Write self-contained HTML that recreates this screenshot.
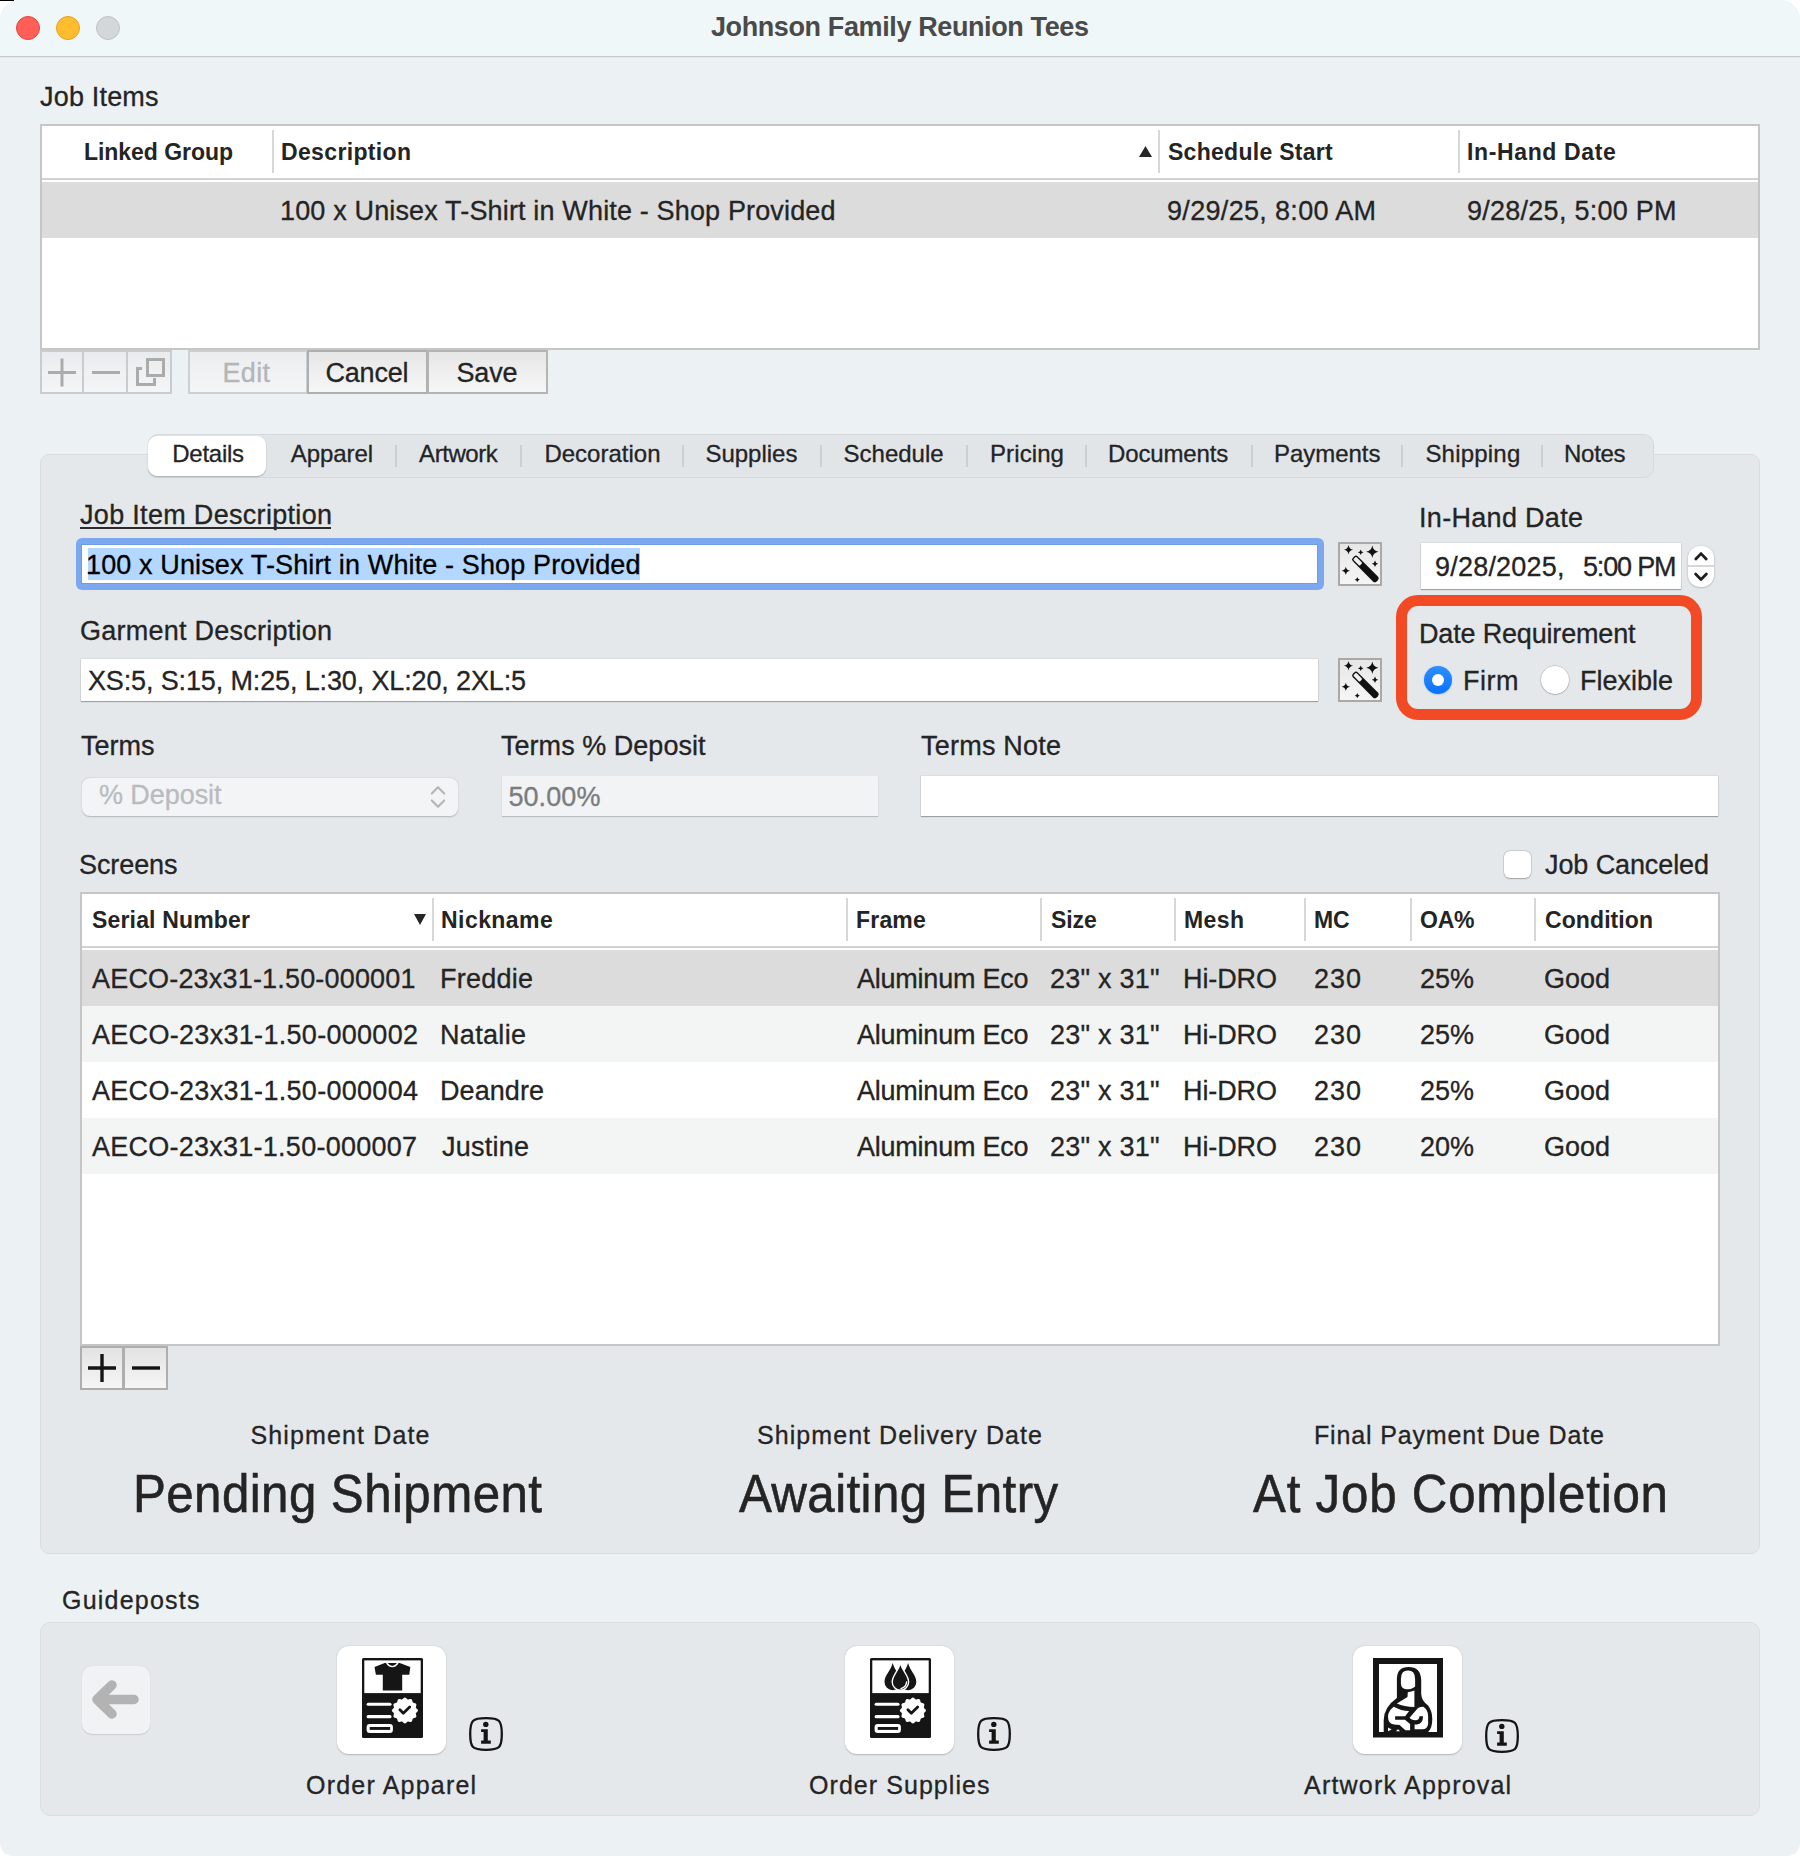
<!DOCTYPE html><html><head><meta charset="utf-8"><style>
*{box-sizing:border-box;margin:0;padding:0}
html,body{width:1800px;height:1856px;overflow:hidden;background:#fff}
body{font-family:"Liberation Sans",sans-serif;position:relative}
.t{position:absolute;white-space:pre}
.r{position:absolute}
svg{position:absolute;overflow:visible}
</style></head><body>
<div class="r" style="left:0px;top:0px;width:1800px;height:1856px;background:#ECF1F4;border-radius:20px 20px 13px 13px"></div>
<div class="r" style="left:0px;top:0px;width:14px;height:1px;background:#000"></div>
<div class="r" style="left:0px;top:0px;width:1800px;height:56px;background:#EFF7F9;border-radius:20px 20px 0 0"></div>
<div class="r" style="left:0px;top:55px;width:1800px;height:1px;background:#F1F8FA"></div>
<div class="r" style="left:0px;top:56px;width:1800px;height:1px;background:#C4C9CD"></div>
<div class="r" style="left:0px;top:57px;width:1800px;height:1px;background:#E2E7EA"></div>
<div class="r" style="left:16px;top:16px;width:24px;height:24px;border-radius:50%;background:#FF5F57;border:1px solid #E2463F"></div>
<div class="r" style="left:56px;top:16px;width:24px;height:24px;border-radius:50%;background:#FEBC2E;border:1px solid #E1A325"></div>
<div class="r" style="left:96px;top:16px;width:24px;height:24px;border-radius:50%;background:#D3D7DA;border:1px solid #BFC3C6"></div>
<div class="t" style="left:710.90px;top:14px;font-size:27px;line-height:27px;letter-spacing:-0.386px;color:#4A4A4A;font-weight:700;">Johnson Family Reunion Tees</div>
<div class="t" style="left:40.00px;top:84px;font-size:27px;line-height:27px;letter-spacing:0.182px;color:#242424;-webkit-text-stroke:0.30px currentColor;">Job Items</div>
<div class="r" style="left:40px;top:124px;width:1720px;height:226px;background:#fff;border:2px solid #C6C6C6"></div>
<div class="r" style="left:42px;top:178px;width:1716px;height:2px;background:#D2D2D2"></div>
<div class="r" style="left:42px;top:182px;width:1716px;height:56px;background:#DCDCDC"></div>
<div class="r" style="left:272px;top:130px;width:2px;height:43px;background:#D8D8D8"></div>
<div class="r" style="left:1158px;top:130px;width:2px;height:43px;background:#D8D8D8"></div>
<div class="r" style="left:1458px;top:130px;width:2px;height:43px;background:#D8D8D8"></div>
<div class="t" style="left:84.00px;top:141px;font-size:23px;line-height:23px;letter-spacing:-0.041px;color:#242424;font-weight:700;">Linked Group</div>
<div class="t" style="left:281.00px;top:141px;font-size:23px;line-height:23px;letter-spacing:0.353px;color:#242424;font-weight:700;">Description</div>
<div class="t" style="left:1168.00px;top:141px;font-size:23px;line-height:23px;letter-spacing:0.278px;color:#242424;font-weight:700;">Schedule Start</div>
<div class="t" style="left:1467.00px;top:141px;font-size:23px;line-height:23px;letter-spacing:0.632px;color:#242424;font-weight:700;">In-Hand Date</div>
<svg style="left:1139px;top:146px" width="13" height="11"><path d="M0 11 L6.5 0 L13 11Z" fill="#262626"/></svg>
<div class="t" style="left:280.00px;top:198px;font-size:27px;line-height:27px;letter-spacing:0.154px;color:#242424;-webkit-text-stroke:0.30px currentColor;">100 x Unisex T-Shirt in White - Shop Provided</div>
<div class="t" style="left:1167.00px;top:198px;font-size:27px;line-height:27px;letter-spacing:0.324px;color:#242424;-webkit-text-stroke:0.30px currentColor;">9/29/25, 8:00 AM</div>
<div class="t" style="left:1467.00px;top:198px;font-size:27px;line-height:27px;letter-spacing:0.257px;color:#242424;-webkit-text-stroke:0.30px currentColor;">9/28/25, 5:00 PM</div>
<div class="r" style="left:40px;top:350px;width:44px;height:44px;background:linear-gradient(#E9ECEE,#F4F5F6);border:2px solid #C9CCCE"></div>
<div class="r" style="left:82px;top:350px;width:46px;height:44px;background:linear-gradient(#E9ECEE,#F4F5F6);border:2px solid #C9CCCE"></div>
<div class="r" style="left:126px;top:350px;width:46px;height:44px;background:linear-gradient(#E9ECEE,#F4F5F6);border:2px solid #C9CCCE"></div>
<svg style="left:40px;top:350px" width="132" height="44"><g stroke="#ABABAB" stroke-width="3" fill="none"><path d="M8 22.5 H36 M22 8.5 V36.5"/><path d="M52 22.5 H80"/><rect x="107.5" y="9.5" width="16" height="16"/><path d="M102 18.5 H97.5 V34.5 H114.5 V28"/></g></svg>
<div class="r" style="left:188px;top:350px;width:120px;height:44px;background:linear-gradient(#EBEDEF,#F4F5F6);border:2px solid #CDD0D2"></div>
<div class="r" style="left:307px;top:350px;width:121px;height:44px;background:linear-gradient(#E6E6E6,#F7F7F7);border:2px solid #AEAEAE"></div>
<div class="r" style="left:427px;top:350px;width:121px;height:44px;background:linear-gradient(#E6E6E6,#F7F7F7);border:2px solid #B4B4B4"></div>
<div class="t" style="left:222.50px;top:360px;font-size:27px;line-height:27px;letter-spacing:0.326px;color:#B3B5B7;-webkit-text-stroke:0.30px currentColor;">Edit</div>
<div class="t" style="left:325.50px;top:360px;font-size:27px;line-height:27px;letter-spacing:-0.209px;color:#242424;-webkit-text-stroke:0.30px currentColor;">Cancel</div>
<div class="t" style="left:456.50px;top:360px;font-size:27px;line-height:27px;letter-spacing:-0.175px;color:#242424;-webkit-text-stroke:0.30px currentColor;">Save</div>
<div class="r" style="left:40px;top:454px;width:1720px;height:1100px;background:#E4E8EB;border:1px solid #D9DDE0;border-radius:9px"></div>
<div class="r" style="left:148px;top:434px;width:1506px;height:44px;background:#E1E5E8;border:1px solid #D6DADD;border-radius:10px"></div>
<div class="r" style="left:148px;top:436px;width:118px;height:40px;background:#fff;border-radius:9px;box-shadow:0 1px 1.5px rgba(0,0,0,0.25)"></div>
<div class="t" style="left:172.20px;top:442px;font-size:24px;line-height:24px;letter-spacing:-0.243px;color:#242424;-webkit-text-stroke:0.30px currentColor;">Details</div>
<div class="t" style="left:290.80px;top:442px;font-size:24px;line-height:24px;letter-spacing:-0.082px;color:#242424;-webkit-text-stroke:0.30px currentColor;">Apparel</div>
<div class="t" style="left:419.10px;top:442px;font-size:24px;line-height:24px;letter-spacing:-0.457px;color:#242424;-webkit-text-stroke:0.30px currentColor;">Artwork</div>
<div class="t" style="left:544.40px;top:442px;font-size:24px;line-height:24px;letter-spacing:0.009px;color:#242424;-webkit-text-stroke:0.30px currentColor;">Decoration</div>
<div class="t" style="left:705.40px;top:442px;font-size:24px;line-height:24px;letter-spacing:-0.009px;color:#242424;-webkit-text-stroke:0.30px currentColor;">Supplies</div>
<div class="t" style="left:843.50px;top:442px;font-size:24px;line-height:24px;letter-spacing:0.010px;color:#242424;-webkit-text-stroke:0.30px currentColor;">Schedule</div>
<div class="t" style="left:990.00px;top:442px;font-size:24px;line-height:24px;letter-spacing:0.098px;color:#242424;-webkit-text-stroke:0.30px currentColor;">Pricing</div>
<div class="t" style="left:1108.00px;top:442px;font-size:24px;line-height:24px;letter-spacing:-0.148px;color:#242424;-webkit-text-stroke:0.30px currentColor;">Documents</div>
<div class="t" style="left:1274.00px;top:442px;font-size:24px;line-height:24px;letter-spacing:-0.044px;color:#242424;-webkit-text-stroke:0.30px currentColor;">Payments</div>
<div class="t" style="left:1425.40px;top:442px;font-size:24px;line-height:24px;letter-spacing:0.205px;color:#242424;-webkit-text-stroke:0.30px currentColor;">Shipping</div>
<div class="t" style="left:1564.00px;top:442px;font-size:24px;line-height:24px;letter-spacing:-0.274px;color:#242424;-webkit-text-stroke:0.30px currentColor;">Notes</div>
<div class="r" style="left:394.5px;top:445px;width:2px;height:22px;background:#CBCFD2"></div>
<div class="r" style="left:520.3px;top:445px;width:2px;height:22px;background:#CBCFD2"></div>
<div class="r" style="left:682.3px;top:445px;width:2px;height:22px;background:#CBCFD2"></div>
<div class="r" style="left:820.0px;top:445px;width:2px;height:22px;background:#CBCFD2"></div>
<div class="r" style="left:966.0px;top:445px;width:2px;height:22px;background:#CBCFD2"></div>
<div class="r" style="left:1084.5px;top:445px;width:2px;height:22px;background:#CBCFD2"></div>
<div class="r" style="left:1250.8px;top:445px;width:2px;height:22px;background:#CBCFD2"></div>
<div class="r" style="left:1401.3px;top:445px;width:2px;height:22px;background:#CBCFD2"></div>
<div class="r" style="left:1540.5px;top:445px;width:2px;height:22px;background:#CBCFD2"></div>
<div class="t" style="left:80.00px;top:502px;font-size:27px;line-height:27px;letter-spacing:0.311px;color:#242424;-webkit-text-stroke:0.30px currentColor;">Job Item Description</div>
<div class="r" style="left:80px;top:527px;width:251px;height:2px;background:#2A2A2A"></div>
<div class="r" style="left:76px;top:538px;width:1248px;height:52px;border-radius:6px;background:#7CA8EF"></div>
<div class="r" style="left:82px;top:545px;width:1235px;height:38px;background:#fff;box-shadow:0 0 0 1px #6F9BE3"></div>
<div class="r" style="left:88px;top:548px;width:552px;height:32px;background:#B3D7FF"></div>
<div class="t" style="left:86.00px;top:552px;font-size:27px;line-height:27px;letter-spacing:0.131px;color:#000;-webkit-text-stroke:0.30px currentColor;">100 x Unisex T-Shirt in White - Shop Provided</div>
<svg style="left:1338px;top:542px" width="44" height="44"><defs><linearGradient id="wg" x1="0" y1="0" x2="0" y2="1"><stop offset="0" stop-color="#E6E6E6"/><stop offset="1" stop-color="#F6F6F6"/></linearGradient></defs><rect x="1" y="1" width="42" height="42" fill="url(#wg)" stroke="#A9A9A9" stroke-width="2"/>
<g fill="#111"><path d="M34.3 3.499999999999999 Q35.105999999999995 8.893999999999998 40.5 9.7 Q35.105999999999995 10.506 34.3 15.899999999999999 Q33.494 10.506 28.099999999999998 9.7 Q33.494 8.893999999999998 34.3 3.499999999999999Z"/><circle cx="34.3" cy="9.7" r="1.86"/><path d="M10.5 3.0 Q11.098 7.102 15.1 7.7 Q11.098 8.298 10.5 12.4 Q9.902 8.298 5.9 7.7 Q9.902 7.102 10.5 3.0Z"/><circle cx="10.5" cy="7.7" r="1.38"/><path d="M22.7 7.500000000000001 Q23.064 9.936 25.5 10.3 Q23.064 10.664000000000001 22.7 13.100000000000001 Q22.336 10.664000000000001 19.9 10.3 Q22.336 9.936 22.7 7.500000000000001Z"/><circle cx="22.7" cy="10.3" r="0.84"/><path d="M37 18.5 Q37.429 21.371000000000002 40.3 21.8 Q37.429 22.229 37 25.1 Q36.571 22.229 33.7 21.8 Q36.571 21.371000000000002 37 18.5Z"/><circle cx="37" cy="21.8" r="0.99"/><path d="M7.8 24.5 Q8.359 28.241 12.1 28.8 Q8.359 29.359 7.8 33.1 Q7.241 29.359 3.5 28.8 Q7.241 28.241 7.8 24.5Z"/><circle cx="7.8" cy="28.8" r="1.29"/><path d="M19.3 35.1 Q19.638 37.362 21.900000000000002 37.7 Q19.638 38.038000000000004 19.3 40.300000000000004 Q18.962 38.038000000000004 16.7 37.7 Q18.962 37.362 19.3 35.1Z"/><circle cx="19.3" cy="37.7" r="0.78"/></g>
<g transform="translate(27.4 26.9) rotate(45)">
<rect x="-16.8" y="-3.5" width="33.6" height="7" rx="2.6" fill="#111"/>
<rect x="-15.3" y="-2" width="9" height="4" rx="1" fill="#EFEFEF"/>
</g></svg>
<svg style="left:1338px;top:658px" width="44" height="44"><defs><linearGradient id="wg" x1="0" y1="0" x2="0" y2="1"><stop offset="0" stop-color="#E6E6E6"/><stop offset="1" stop-color="#F6F6F6"/></linearGradient></defs><rect x="1" y="1" width="42" height="42" fill="url(#wg)" stroke="#A9A9A9" stroke-width="2"/>
<g fill="#111"><path d="M34.3 3.499999999999999 Q35.105999999999995 8.893999999999998 40.5 9.7 Q35.105999999999995 10.506 34.3 15.899999999999999 Q33.494 10.506 28.099999999999998 9.7 Q33.494 8.893999999999998 34.3 3.499999999999999Z"/><circle cx="34.3" cy="9.7" r="1.86"/><path d="M10.5 3.0 Q11.098 7.102 15.1 7.7 Q11.098 8.298 10.5 12.4 Q9.902 8.298 5.9 7.7 Q9.902 7.102 10.5 3.0Z"/><circle cx="10.5" cy="7.7" r="1.38"/><path d="M22.7 7.500000000000001 Q23.064 9.936 25.5 10.3 Q23.064 10.664000000000001 22.7 13.100000000000001 Q22.336 10.664000000000001 19.9 10.3 Q22.336 9.936 22.7 7.500000000000001Z"/><circle cx="22.7" cy="10.3" r="0.84"/><path d="M37 18.5 Q37.429 21.371000000000002 40.3 21.8 Q37.429 22.229 37 25.1 Q36.571 22.229 33.7 21.8 Q36.571 21.371000000000002 37 18.5Z"/><circle cx="37" cy="21.8" r="0.99"/><path d="M7.8 24.5 Q8.359 28.241 12.1 28.8 Q8.359 29.359 7.8 33.1 Q7.241 29.359 3.5 28.8 Q7.241 28.241 7.8 24.5Z"/><circle cx="7.8" cy="28.8" r="1.29"/><path d="M19.3 35.1 Q19.638 37.362 21.900000000000002 37.7 Q19.638 38.038000000000004 19.3 40.300000000000004 Q18.962 38.038000000000004 16.7 37.7 Q18.962 37.362 19.3 35.1Z"/><circle cx="19.3" cy="37.7" r="0.78"/></g>
<g transform="translate(27.4 26.9) rotate(45)">
<rect x="-16.8" y="-3.5" width="33.6" height="7" rx="2.6" fill="#111"/>
<rect x="-15.3" y="-2" width="9" height="4" rx="1" fill="#EFEFEF"/>
</g></svg>
<div class="t" style="left:1419.00px;top:505px;font-size:27px;line-height:27px;letter-spacing:0.312px;color:#242424;-webkit-text-stroke:0.30px currentColor;">In-Hand Date</div>
<div class="r" style="left:1421px;top:543px;width:260px;height:46px;background:#fff;box-shadow:0 1px 1px rgba(0,0,0,0.28), 0 0 0 0.5px rgba(0,0,0,0.08)"></div>
<div class="t" style="left:1435.00px;top:554px;font-size:27px;line-height:27px;letter-spacing:0.209px;color:#242424;-webkit-text-stroke:0.30px currentColor;">9/28/2025,</div>
<div class="t" style="left:1583.00px;top:554px;font-size:27px;line-height:27px;letter-spacing:-1.177px;color:#242424;-webkit-text-stroke:0.30px currentColor;">5:00 PM</div>
<div class="r" style="left:1688px;top:546px;width:26px;height:41px;border-radius:12px;background:#fff;box-shadow:0 0.5px 2px rgba(0,0,0,0.3)"></div>
<div class="r" style="left:1688px;top:565px;width:26px;height:2px;background:#D6D6D6"></div>
<svg style="left:1688px;top:546px" width="26" height="41"><g stroke="#1E1E1E" stroke-width="2.8" fill="none" stroke-linecap="round" stroke-linejoin="round"><path d="M7.8 13 L13 7.6 L18.2 13"/><path d="M7.6 28 L13 33.4 L18.4 28"/></g></svg>
<div class="r" style="left:1396px;top:595px;width:306px;height:125px;border:11.5px solid #F24A24;border-radius:22px"></div>
<div class="t" style="left:1419.00px;top:621px;font-size:27px;line-height:27px;letter-spacing:-0.174px;color:#242424;-webkit-text-stroke:0.30px currentColor;">Date Requirement</div>
<div class="r" style="left:1424px;top:666px;width:28px;height:28px;border-radius:50%;background:linear-gradient(#2E8FFF,#0A72FF);box-shadow:0 0.5px 1.5px rgba(0,60,160,0.3)"></div>
<div class="r" style="left:1432px;top:674px;width:12px;height:12px;border-radius:50%;background:#fff"></div>
<div class="t" style="left:1463.00px;top:668px;font-size:27px;line-height:27px;letter-spacing:0.506px;color:#242424;-webkit-text-stroke:0.30px currentColor;">Firm</div>
<div class="r" style="left:1541px;top:666px;width:28px;height:28px;border-radius:50%;background:#fff;box-shadow:0 0 0 0.5px rgba(0,0,0,0.15),0 0.5px 1.5px rgba(0,0,0,0.3)"></div>
<div class="t" style="left:1580.00px;top:668px;font-size:27px;line-height:27px;letter-spacing:-0.003px;color:#242424;-webkit-text-stroke:0.30px currentColor;">Flexible</div>
<div class="t" style="left:80.00px;top:618px;font-size:27px;line-height:27px;letter-spacing:0.246px;color:#242424;-webkit-text-stroke:0.30px currentColor;">Garment Description</div>
<div class="r" style="left:81px;top:659px;width:1237px;height:42px;background:#fff;box-shadow:0 1px 1px rgba(0,0,0,0.28), 0 0 0 0.5px rgba(0,0,0,0.08)"></div>
<div class="t" style="left:88.00px;top:668px;font-size:27px;line-height:27px;letter-spacing:-0.136px;color:#242424;-webkit-text-stroke:0.30px currentColor;">XS:5, S:15, M:25, L:30, XL:20, 2XL:5</div>
<div class="t" style="left:81.00px;top:733px;font-size:27px;line-height:27px;letter-spacing:0.000px;color:#242424;-webkit-text-stroke:0.30px currentColor;">Terms</div>
<div class="t" style="left:501.00px;top:733px;font-size:27px;line-height:27px;letter-spacing:0.032px;color:#242424;-webkit-text-stroke:0.30px currentColor;">Terms % Deposit</div>
<div class="t" style="left:921.00px;top:733px;font-size:27px;line-height:27px;letter-spacing:0.220px;color:#242424;-webkit-text-stroke:0.30px currentColor;">Terms Note</div>
<div class="r" style="left:82px;top:778px;width:376px;height:38px;border-radius:8px;background:#F2F4F5;box-shadow:0 0.5px 1.5px rgba(0,0,0,0.22)"></div>
<div class="t" style="left:99.00px;top:782px;font-size:27px;line-height:27px;letter-spacing:-0.069px;color:#B9BCBE;-webkit-text-stroke:0.30px currentColor;">% Deposit</div>
<svg style="left:426px;top:782px" width="24" height="30"><g stroke="#B3B5B7" stroke-width="2.1" fill="none" stroke-linecap="round" stroke-linejoin="round"><path d="M5.8 11.6 L12 5.2 L18.2 11.6"/><path d="M5.8 18.4 L12 24.8 L18.2 18.4"/></g></svg>
<div class="r" style="left:502px;top:776px;width:376px;height:40px;background:#F1F3F4;box-shadow:0 1px 1px rgba(0,0,0,0.18)"></div>
<div class="t" style="left:508.40px;top:784px;font-size:27px;line-height:27px;letter-spacing:0.087px;color:#7A7C7E;-webkit-text-stroke:0.30px currentColor;">50.00%</div>
<div class="r" style="left:921px;top:776px;width:797px;height:40px;background:#fff;box-shadow:0 1px 1px rgba(0,0,0,0.28), 0 0 0 0.5px rgba(0,0,0,0.08)"></div>
<div class="t" style="left:79.00px;top:852px;font-size:27px;line-height:27px;letter-spacing:-0.091px;color:#242424;-webkit-text-stroke:0.30px currentColor;">Screens</div>
<div class="r" style="left:1504px;top:851px;width:27px;height:27px;border-radius:6px;background:#fff;box-shadow:0 0 0 0.5px rgba(0,0,0,0.14),0 0.5px 1.5px rgba(0,0,0,0.25)"></div>
<div class="t" style="left:1545.00px;top:852px;font-size:27px;line-height:27px;letter-spacing:-0.100px;color:#242424;-webkit-text-stroke:0.30px currentColor;">Job Canceled</div>
<div class="r" style="left:80px;top:892px;width:1640px;height:454px;background:#fff;border:2px solid #C6C6C6"></div>
<div class="r" style="left:82px;top:946px;width:1636px;height:2px;background:#D2D2D2"></div>
<div class="r" style="left:82px;top:950px;width:1636px;height:56px;background:#DCDCDC"></div>
<div class="r" style="left:82px;top:1006px;width:1636px;height:56px;background:#F3F4F4"></div>
<div class="r" style="left:82px;top:1118px;width:1636px;height:56px;background:#F3F4F4"></div>
<div class="r" style="left:432px;top:898px;width:2px;height:43px;background:#D8D8D8"></div>
<div class="r" style="left:846px;top:898px;width:2px;height:43px;background:#D8D8D8"></div>
<div class="r" style="left:1040px;top:898px;width:2px;height:43px;background:#D8D8D8"></div>
<div class="r" style="left:1174px;top:898px;width:2px;height:43px;background:#D8D8D8"></div>
<div class="r" style="left:1304px;top:898px;width:2px;height:43px;background:#D8D8D8"></div>
<div class="r" style="left:1410px;top:898px;width:2px;height:43px;background:#D8D8D8"></div>
<div class="r" style="left:1534px;top:898px;width:2px;height:43px;background:#D8D8D8"></div>
<svg style="left:414px;top:914px" width="12" height="11"><path d="M0 0 L12 0 L6 11Z" fill="#262626"/></svg>
<div class="t" style="left:92.00px;top:909px;font-size:23px;line-height:23px;letter-spacing:0.167px;color:#242424;font-weight:700;">Serial Number</div>
<div class="t" style="left:441.00px;top:909px;font-size:23px;line-height:23px;letter-spacing:0.446px;color:#242424;font-weight:700;">Nickname</div>
<div class="t" style="left:856.00px;top:909px;font-size:23px;line-height:23px;letter-spacing:0.189px;color:#242424;font-weight:700;">Frame</div>
<div class="t" style="left:1051.00px;top:909px;font-size:23px;line-height:23px;letter-spacing:-0.077px;color:#242424;font-weight:700;">Size</div>
<div class="t" style="left:1184.00px;top:909px;font-size:23px;line-height:23px;letter-spacing:0.419px;color:#242424;font-weight:700;">Mesh</div>
<div class="t" style="left:1314.00px;top:909px;font-size:23px;line-height:23px;letter-spacing:-0.159px;color:#242424;font-weight:700;">MC</div>
<div class="t" style="left:1420.00px;top:909px;font-size:23px;line-height:23px;letter-spacing:-0.250px;color:#242424;font-weight:700;">OA%</div>
<div class="t" style="left:1545.00px;top:909px;font-size:23px;line-height:23px;letter-spacing:0.094px;color:#242424;font-weight:700;">Condition</div>
<div class="t" style="left:92.00px;top:966px;font-size:27px;line-height:27px;letter-spacing:0.182px;color:#242424;-webkit-text-stroke:0.30px currentColor;">AECO-23x31-1.50-000001</div>
<div class="t" style="left:440.00px;top:966px;font-size:27px;line-height:27px;letter-spacing:0.245px;color:#242424;-webkit-text-stroke:0.30px currentColor;">Freddie</div>
<div class="t" style="left:857.00px;top:966px;font-size:27px;line-height:27px;letter-spacing:-0.232px;color:#242424;-webkit-text-stroke:0.30px currentColor;">Aluminum Eco</div>
<div class="t" style="left:1050.00px;top:966px;font-size:27px;line-height:27px;letter-spacing:0.231px;color:#242424;-webkit-text-stroke:0.30px currentColor;">23" x 31"</div>
<div class="t" style="left:1183.00px;top:966px;font-size:27px;line-height:27px;letter-spacing:-0.097px;color:#242424;-webkit-text-stroke:0.30px currentColor;">Hi-DRO</div>
<div class="t" style="left:1314.00px;top:966px;font-size:27px;line-height:27px;letter-spacing:0.984px;color:#242424;-webkit-text-stroke:0.30px currentColor;">230</div>
<div class="t" style="left:1420.00px;top:966px;font-size:27px;line-height:27px;letter-spacing:-0.016px;color:#242424;-webkit-text-stroke:0.30px currentColor;">25%</div>
<div class="t" style="left:1544.00px;top:966px;font-size:27px;line-height:27px;letter-spacing:-0.011px;color:#242424;-webkit-text-stroke:0.30px currentColor;">Good</div>
<div class="t" style="left:92.00px;top:1022px;font-size:27px;line-height:27px;letter-spacing:0.301px;color:#242424;-webkit-text-stroke:0.30px currentColor;">AECO-23x31-1.50-000002</div>
<div class="t" style="left:440.00px;top:1022px;font-size:27px;line-height:27px;letter-spacing:0.328px;color:#242424;-webkit-text-stroke:0.30px currentColor;">Natalie</div>
<div class="t" style="left:857.00px;top:1022px;font-size:27px;line-height:27px;letter-spacing:-0.232px;color:#242424;-webkit-text-stroke:0.30px currentColor;">Aluminum Eco</div>
<div class="t" style="left:1050.00px;top:1022px;font-size:27px;line-height:27px;letter-spacing:0.231px;color:#242424;-webkit-text-stroke:0.30px currentColor;">23" x 31"</div>
<div class="t" style="left:1183.00px;top:1022px;font-size:27px;line-height:27px;letter-spacing:-0.097px;color:#242424;-webkit-text-stroke:0.30px currentColor;">Hi-DRO</div>
<div class="t" style="left:1314.00px;top:1022px;font-size:27px;line-height:27px;letter-spacing:0.984px;color:#242424;-webkit-text-stroke:0.30px currentColor;">230</div>
<div class="t" style="left:1420.00px;top:1022px;font-size:27px;line-height:27px;letter-spacing:-0.016px;color:#242424;-webkit-text-stroke:0.30px currentColor;">25%</div>
<div class="t" style="left:1544.00px;top:1022px;font-size:27px;line-height:27px;letter-spacing:-0.011px;color:#242424;-webkit-text-stroke:0.30px currentColor;">Good</div>
<div class="t" style="left:92.00px;top:1078px;font-size:27px;line-height:27px;letter-spacing:0.301px;color:#242424;-webkit-text-stroke:0.30px currentColor;">AECO-23x31-1.50-000004</div>
<div class="t" style="left:440.00px;top:1078px;font-size:27px;line-height:27px;letter-spacing:0.074px;color:#242424;-webkit-text-stroke:0.30px currentColor;">Deandre</div>
<div class="t" style="left:857.00px;top:1078px;font-size:27px;line-height:27px;letter-spacing:-0.232px;color:#242424;-webkit-text-stroke:0.30px currentColor;">Aluminum Eco</div>
<div class="t" style="left:1050.00px;top:1078px;font-size:27px;line-height:27px;letter-spacing:0.231px;color:#242424;-webkit-text-stroke:0.30px currentColor;">23" x 31"</div>
<div class="t" style="left:1183.00px;top:1078px;font-size:27px;line-height:27px;letter-spacing:-0.097px;color:#242424;-webkit-text-stroke:0.30px currentColor;">Hi-DRO</div>
<div class="t" style="left:1314.00px;top:1078px;font-size:27px;line-height:27px;letter-spacing:0.984px;color:#242424;-webkit-text-stroke:0.30px currentColor;">230</div>
<div class="t" style="left:1420.00px;top:1078px;font-size:27px;line-height:27px;letter-spacing:-0.016px;color:#242424;-webkit-text-stroke:0.30px currentColor;">25%</div>
<div class="t" style="left:1544.00px;top:1078px;font-size:27px;line-height:27px;letter-spacing:-0.011px;color:#242424;-webkit-text-stroke:0.30px currentColor;">Good</div>
<div class="t" style="left:92.00px;top:1134px;font-size:27px;line-height:27px;letter-spacing:0.253px;color:#242424;-webkit-text-stroke:0.30px currentColor;">AECO-23x31-1.50-000007</div>
<div class="t" style="left:442.00px;top:1134px;font-size:27px;line-height:27px;letter-spacing:0.245px;color:#242424;-webkit-text-stroke:0.30px currentColor;">Justine</div>
<div class="t" style="left:857.00px;top:1134px;font-size:27px;line-height:27px;letter-spacing:-0.232px;color:#242424;-webkit-text-stroke:0.30px currentColor;">Aluminum Eco</div>
<div class="t" style="left:1050.00px;top:1134px;font-size:27px;line-height:27px;letter-spacing:0.231px;color:#242424;-webkit-text-stroke:0.30px currentColor;">23" x 31"</div>
<div class="t" style="left:1183.00px;top:1134px;font-size:27px;line-height:27px;letter-spacing:-0.097px;color:#242424;-webkit-text-stroke:0.30px currentColor;">Hi-DRO</div>
<div class="t" style="left:1314.00px;top:1134px;font-size:27px;line-height:27px;letter-spacing:0.984px;color:#242424;-webkit-text-stroke:0.30px currentColor;">230</div>
<div class="t" style="left:1420.00px;top:1134px;font-size:27px;line-height:27px;letter-spacing:-0.016px;color:#242424;-webkit-text-stroke:0.30px currentColor;">20%</div>
<div class="t" style="left:1544.00px;top:1134px;font-size:27px;line-height:27px;letter-spacing:-0.011px;color:#242424;-webkit-text-stroke:0.30px currentColor;">Good</div>
<div class="r" style="left:80px;top:1346px;width:45px;height:44px;background:linear-gradient(#E3E3E3,#F5F5F5);border:2px solid #AEAEAE"></div>
<div class="r" style="left:122px;top:1346px;width:46px;height:44px;background:linear-gradient(#E3E3E3,#F5F5F5);border:2px solid #AEAEAE"></div>
<div class="r" style="left:122px;top:1346px;width:3px;height:44px;background:#AEAEAE"></div>
<svg style="left:80px;top:1346px" width="88" height="44"><g stroke="#141414" stroke-width="3.4" fill="none"><path d="M8 22 H36 M22 8 V36"/><path d="M52 22 H80"/></g></svg>
<div class="t" style="left:250.50px;top:1423px;font-size:25px;line-height:25px;letter-spacing:1.128px;color:#242424;-webkit-text-stroke:0.30px currentColor;">Shipment Date</div>
<div class="t" style="left:757.00px;top:1423px;font-size:25px;line-height:25px;letter-spacing:1.062px;color:#242424;-webkit-text-stroke:0.30px currentColor;">Shipment Delivery Date</div>
<div class="t" style="left:1314.00px;top:1423px;font-size:25px;line-height:25px;letter-spacing:0.836px;color:#242424;-webkit-text-stroke:0.30px currentColor;">Final Payment Due Date</div>
<div class="t" style="left:133.28px;top:1467px;font-size:53px;line-height:53px;letter-spacing:0.441px;color:#242424;-webkit-text-stroke:0.59px currentColor;transform:scaleX(0.93);transform-origin:0 0;">Pending Shipment</div>
<div class="t" style="left:739.40px;top:1467px;font-size:53px;line-height:53px;letter-spacing:0.412px;color:#242424;-webkit-text-stroke:0.59px currentColor;transform:scaleX(0.93);transform-origin:0 0;">Awaiting Entry</div>
<div class="t" style="left:1252.70px;top:1467px;font-size:53px;line-height:53px;letter-spacing:0.824px;color:#242424;-webkit-text-stroke:0.59px currentColor;transform:scaleX(0.93);transform-origin:0 0;">At Job Completion</div>
<div class="t" style="left:62.00px;top:1588px;font-size:25px;line-height:25px;letter-spacing:1.226px;color:#242424;-webkit-text-stroke:0.30px currentColor;">Guideposts</div>
<div class="r" style="left:40px;top:1622px;width:1720px;height:194px;background:#E4E8EB;border:1px solid #DADEE1;border-radius:10px"></div>
<div class="r" style="left:82px;top:1666px;width:68px;height:68px;border-radius:10px;background:#F0F2F3;box-shadow:0 0.5px 1px rgba(0,0,0,0.12)"></div>
<svg style="left:82px;top:1666px" width="68" height="68"><g stroke="#B3B3B3" stroke-width="9.5" fill="none" stroke-linecap="round" stroke-linejoin="round"><path d="M52 33.5 H16"/><path d="M30 19 L15 33.5 L30 48"/></g></svg>
<div class="r" style="left:337.0px;top:1646px;width:109px;height:108px;border-radius:12px;background:#fff;box-shadow:0 0.5px 1.5px rgba(0,0,0,0.22)"></div>
<div class="t" style="left:306.00px;top:1773px;font-size:25px;line-height:25px;letter-spacing:1.211px;color:#242424;-webkit-text-stroke:0.30px currentColor;">Order Apparel</div>
<div class="r" style="left:845.0px;top:1646px;width:109px;height:108px;border-radius:12px;background:#fff;box-shadow:0 0.5px 1.5px rgba(0,0,0,0.22)"></div>
<div class="t" style="left:809.00px;top:1773px;font-size:25px;line-height:25px;letter-spacing:1.058px;color:#242424;-webkit-text-stroke:0.30px currentColor;">Order Supplies</div>
<div class="r" style="left:1353.0px;top:1646px;width:109px;height:108px;border-radius:12px;background:#fff;box-shadow:0 0.5px 1.5px rgba(0,0,0,0.22)"></div>
<div class="t" style="left:1304.00px;top:1773px;font-size:25px;line-height:25px;letter-spacing:1.214px;color:#242424;-webkit-text-stroke:0.30px currentColor;">Artwork Approval</div>
<svg style="left:361.5px;top:1658px" width="61" height="80"><rect x="0" y="0" width="61" height="80" rx="1.5" fill="#151515"/><rect x="2.3" y="2.4" width="56.4" height="32.7" fill="#fff"/><path fill="#151515" d="M22.7 4.9 L12.5 9.1 L13.9 16.8 L20.8 16.8 L20.8 32.6 L40.2 32.6 L40.2 16.8 L47.3 16.8 L48.3 9.1 L37.7 4.9Z"/><path d="M24.6 5 Q30.3 12.2 36 5" stroke="#fff" stroke-width="1.3" fill="none"/><g fill="#fff"><rect x="4.6" y="44.7" width="24.9" height="3.1" rx="1.5"/><rect x="4.6" y="57.1" width="24.9" height="3.1" rx="1.5"/><rect x="4.6" y="65.9" width="26.3" height="9.1" rx="3"/></g><rect x="7.7" y="69" width="20.4" height="2.9" fill="#151515"/><path fill="#fff" d="M42.90 39.45 L43.57 39.63 L44.20 40.11 L44.77 40.71 L45.29 41.24 L45.84 41.54 L46.46 41.55 L47.18 41.36 L47.97 41.11 L48.75 41.02 L49.42 41.20 L49.92 41.69 L50.23 42.42 L50.41 43.22 L50.60 43.94 L50.93 44.47 L51.46 44.80 L52.18 44.99 L52.98 45.17 L53.71 45.48 L54.20 45.98 L54.38 46.65 L54.29 47.43 L54.04 48.22 L53.85 48.94 L53.86 49.56 L54.16 50.11 L54.69 50.63 L55.29 51.20 L55.77 51.83 L55.95 52.50 L55.77 53.17 L55.29 53.80 L54.69 54.37 L54.16 54.89 L53.86 55.44 L53.85 56.06 L54.04 56.78 L54.29 57.57 L54.38 58.35 L54.20 59.02 L53.71 59.52 L52.98 59.83 L52.18 60.01 L51.46 60.20 L50.93 60.53 L50.60 61.06 L50.41 61.78 L50.23 62.58 L49.92 63.31 L49.42 63.80 L48.75 63.98 L47.97 63.89 L47.18 63.64 L46.46 63.45 L45.84 63.46 L45.29 63.76 L44.77 64.29 L44.20 64.89 L43.57 65.37 L42.90 65.55 L42.23 65.37 L41.60 64.89 L41.03 64.29 L40.51 63.76 L39.96 63.46 L39.34 63.45 L38.62 63.64 L37.83 63.89 L37.05 63.98 L36.38 63.80 L35.88 63.31 L35.57 62.58 L35.39 61.78 L35.20 61.06 L34.87 60.53 L34.34 60.20 L33.62 60.01 L32.82 59.83 L32.09 59.52 L31.60 59.03 L31.42 58.35 L31.51 57.57 L31.76 56.78 L31.95 56.06 L31.94 55.44 L31.64 54.89 L31.11 54.37 L30.51 53.80 L30.03 53.17 L29.85 52.50 L30.03 51.83 L30.51 51.20 L31.11 50.63 L31.64 50.11 L31.94 49.56 L31.95 48.94 L31.76 48.22 L31.51 47.43 L31.42 46.65 L31.60 45.98 L32.09 45.48 L32.82 45.17 L33.62 44.99 L34.34 44.80 L34.87 44.47 L35.20 43.94 L35.39 43.22 L35.57 42.42 L35.88 41.69 L36.38 41.20 L37.05 41.02 L37.83 41.11 L38.62 41.36 L39.34 41.55 L39.96 41.54 L40.51 41.24 L41.03 40.71 L41.60 40.11 L42.23 39.63Z"/><path d="M37.9 51.8 L41.3 55.2 L47.7 48.9" stroke="#151515" stroke-width="2.8" fill="none" stroke-linecap="round" stroke-linejoin="round"/></svg>
<svg style="left:869.6px;top:1658px" width="61" height="80"><rect x="0" y="0" width="61" height="80" rx="1.5" fill="#151515"/><rect x="2.3" y="2.4" width="56.4" height="32.7" fill="#fff"/><path fill="#151515" d="M22.7 5.1 C24.75 13.2 30.9 17.25 30.9 24.0 A8.2 8.2 0 0 1 14.5 24.0 C14.5 17.25 20.65 13.2 22.7 5.1Z"/><path fill="#151515" d="M38.1 5.1 C40.15 13.2 46.3 17.25 46.3 24.0 A8.2 8.2 0 0 1 29.900000000000002 24.0 C29.900000000000002 17.25 36.050000000000004 13.2 38.1 5.1Z"/><path fill="#151515" stroke="#fff" stroke-width="1.4" d="M30.4 5.1 C32.449999999999996 13.2 38.599999999999994 17.25 38.599999999999994 24.0 A8.2 8.2 0 0 1 22.2 24.0 C22.2 17.25 28.349999999999998 13.2 30.4 5.1Z"/><path d="M36.6 23.9 Q36.2 29.2 30.9 30.6" stroke="#fff" stroke-width="1.3" fill="none" stroke-linecap="round"/><g fill="#fff"><rect x="4.6" y="44.7" width="24.9" height="3.1" rx="1.5"/><rect x="4.6" y="57.1" width="24.9" height="3.1" rx="1.5"/><rect x="4.6" y="65.9" width="26.3" height="9.1" rx="3"/></g><rect x="7.7" y="69" width="20.4" height="2.9" fill="#151515"/><path fill="#fff" d="M42.90 39.45 L43.57 39.63 L44.20 40.11 L44.77 40.71 L45.29 41.24 L45.84 41.54 L46.46 41.55 L47.18 41.36 L47.97 41.11 L48.75 41.02 L49.42 41.20 L49.92 41.69 L50.23 42.42 L50.41 43.22 L50.60 43.94 L50.93 44.47 L51.46 44.80 L52.18 44.99 L52.98 45.17 L53.71 45.48 L54.20 45.98 L54.38 46.65 L54.29 47.43 L54.04 48.22 L53.85 48.94 L53.86 49.56 L54.16 50.11 L54.69 50.63 L55.29 51.20 L55.77 51.83 L55.95 52.50 L55.77 53.17 L55.29 53.80 L54.69 54.37 L54.16 54.89 L53.86 55.44 L53.85 56.06 L54.04 56.78 L54.29 57.57 L54.38 58.35 L54.20 59.02 L53.71 59.52 L52.98 59.83 L52.18 60.01 L51.46 60.20 L50.93 60.53 L50.60 61.06 L50.41 61.78 L50.23 62.58 L49.92 63.31 L49.42 63.80 L48.75 63.98 L47.97 63.89 L47.18 63.64 L46.46 63.45 L45.84 63.46 L45.29 63.76 L44.77 64.29 L44.20 64.89 L43.57 65.37 L42.90 65.55 L42.23 65.37 L41.60 64.89 L41.03 64.29 L40.51 63.76 L39.96 63.46 L39.34 63.45 L38.62 63.64 L37.83 63.89 L37.05 63.98 L36.38 63.80 L35.88 63.31 L35.57 62.58 L35.39 61.78 L35.20 61.06 L34.87 60.53 L34.34 60.20 L33.62 60.01 L32.82 59.83 L32.09 59.52 L31.60 59.03 L31.42 58.35 L31.51 57.57 L31.76 56.78 L31.95 56.06 L31.94 55.44 L31.64 54.89 L31.11 54.37 L30.51 53.80 L30.03 53.17 L29.85 52.50 L30.03 51.83 L30.51 51.20 L31.11 50.63 L31.64 50.11 L31.94 49.56 L31.95 48.94 L31.76 48.22 L31.51 47.43 L31.42 46.65 L31.60 45.98 L32.09 45.48 L32.82 45.17 L33.62 44.99 L34.34 44.80 L34.87 44.47 L35.20 43.94 L35.39 43.22 L35.57 42.42 L35.88 41.69 L36.38 41.20 L37.05 41.02 L37.83 41.11 L38.62 41.36 L39.34 41.55 L39.96 41.54 L40.51 41.24 L41.03 40.71 L41.60 40.11 L42.23 39.63Z"/><path d="M37.9 51.8 L41.3 55.2 L47.7 48.9" stroke="#151515" stroke-width="2.8" fill="none" stroke-linecap="round" stroke-linejoin="round"/></svg>
<svg style="left:1373px;top:1658px" width="70" height="80"><rect x="0" y="0" width="70" height="79.5" fill="#151515"/><rect x="6" y="6" width="58" height="68" fill="#fff"/><path fill="#151515" d="M10.7 74 L10.7 62 Q11 49 23.9 40 L23.9 20 Q24.5 8.9 35.5 8.9 Q47.8 8.9 48.2 22 L48.2 36 Q48.5 43 55.1 47.4 Q59.3 53 59.3 61 Q59.3 70 55.1 74Z"/><path fill="#fff" d="M27.9 21 Q27.9 12.6 35 12.6 Q42.1 12.6 42.1 21 L42.1 28.4 Q39 31.3 33.5 31.3 Q27.9 31 27.9 25Z"/><path fill="#fff" d="M34.8 34.2 Q38.5 33.8 41.4 32.6 L41.4 49 Q31 49 23.9 45.6 L34.5 39Z"/><path fill="#fff" d="M20.8 48.7 Q15 53 15 58.5 Q15 65.9 21 66.6 L26.6 66.9 L32.4 72.2 L37.1 72.2 L37.1 65.9 L31.9 61.7 L22.1 61.7 L22.1 58.2 L32.1 58.2 L36.1 53 Q28.2 52.9 20.8 48.7Z"/><path fill="#fff" d="M50.3 48.7 Q55.1 51.5 55.1 58 L55.1 65.9 Q54.5 71.2 49.3 71.2 L41.6 71.2 L41.6 66.4 L44 66.4 Q49.8 66 50.1 58.2 L46.4 58.2 Q46.4 62.2 42.4 62.2 Q38.2 62.2 36.6 59.8 L45 50 Q47.5 48.7 50.3 48.7Z"/><path fill="#fff" d="M15 69.6 L18.7 71.4 L15 73.3Z M22.9 73.3 L25 71.2 L27.1 73.3Z"/></svg>
<svg style="left:469px;top:1717px" width="34" height="34"><path d="M17 1.1999999999999993 C30.588 1.1999999999999993 32.8 3.411999999999999 32.8 17 C32.8 30.588 30.588 32.8 17 32.8 C3.411999999999999 32.8 1.1999999999999993 30.588 1.1999999999999993 17 C1.1999999999999993 3.411999999999999 3.411999999999999 1.1999999999999993 17 1.1999999999999993Z" fill="none" stroke="#141414" stroke-width="2.3"/><circle cx="16.8" cy="7.4" r="2.7" fill="#141414"/><path d="M12.1 12.2 H18.8 V23.6 H21.8 V26.8 H12.1 V23.6 H14.6 V15 H12.1Z" fill="#141414"/></svg>
<svg style="left:977px;top:1717px" width="34" height="34"><path d="M17 1.1999999999999993 C30.588 1.1999999999999993 32.8 3.411999999999999 32.8 17 C32.8 30.588 30.588 32.8 17 32.8 C3.411999999999999 32.8 1.1999999999999993 30.588 1.1999999999999993 17 C1.1999999999999993 3.411999999999999 3.411999999999999 1.1999999999999993 17 1.1999999999999993Z" fill="none" stroke="#141414" stroke-width="2.3"/><circle cx="16.8" cy="7.4" r="2.7" fill="#141414"/><path d="M12.1 12.2 H18.8 V23.6 H21.8 V26.8 H12.1 V23.6 H14.6 V15 H12.1Z" fill="#141414"/></svg>
<svg style="left:1485px;top:1719px" width="34" height="34"><path d="M17 1.1999999999999993 C30.588 1.1999999999999993 32.8 3.411999999999999 32.8 17 C32.8 30.588 30.588 32.8 17 32.8 C3.411999999999999 32.8 1.1999999999999993 30.588 1.1999999999999993 17 C1.1999999999999993 3.411999999999999 3.411999999999999 1.1999999999999993 17 1.1999999999999993Z" fill="none" stroke="#141414" stroke-width="2.3"/><circle cx="16.8" cy="7.4" r="2.7" fill="#141414"/><path d="M12.1 12.2 H18.8 V23.6 H21.8 V26.8 H12.1 V23.6 H14.6 V15 H12.1Z" fill="#141414"/></svg>
</body></html>
